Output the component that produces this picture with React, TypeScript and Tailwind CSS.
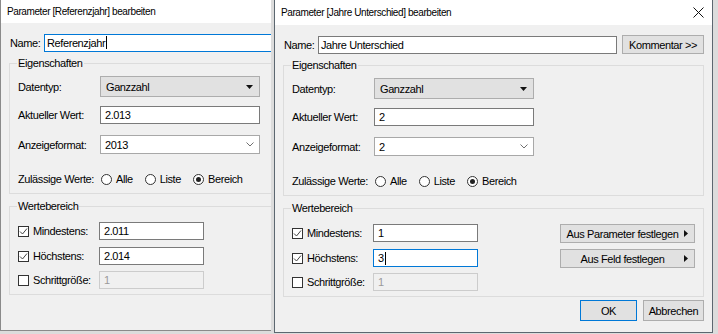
import type { ReactNode } from "react";

type DialogData = {
  title: string;
  titleH: string;
  height: string;
  border: string;
  name: string;
  current: string;
  format: string;
  min: string;
  max: string;
  focus: "name" | "max";
  // left window is partly hidden behind the right one: skip what can't be seen
  cropped?: boolean;
};

const dialogs: DialogData[] = [
  {
    title: "Parameter [Referenzjahr] bearbeiten",
    titleH: "h-[23px]",
    height: "h-[331px]",
    border: "border-[#8a8a8a]",
    name: "Referenzjahr",
    current: "2.013",
    format: "2013",
    min: "2.011",
    max: "2.014",
    focus: "name",
    cropped: true,
  },
  {
    title: "Parameter [Jahre Unterschied] bearbeiten",
    titleH: "h-[25px]",
    height: "h-[333px]",
    border: "border-[#5c6770]",
    name: "Jahre Unterschied",
    current: "2",
    format: "2",
    min: "1",
    max: "3",
    focus: "max",
  },
];

function Caret() {
  return <span className="ml-px inline-block w-px h-[13px] bg-black" />;
}

function TextBox({
  value,
  className,
  focused,
  disabled,
  children,
}: {
  value: string;
  className: string;
  focused?: boolean;
  disabled?: boolean;
  children?: ReactNode;
}) {
  return (
    <div
      className={`flex shrink-0 items-center border pl-[4px] ${className} ${
        disabled
          ? "border-[#cccccc] bg-[#f0f0f0] text-[#9a9a9a]"
          : focused
          ? "border-[#0078d7] bg-white"
          : "border-[#7a7a7a] bg-white"
      }`}
    >
      <span className="whitespace-nowrap">{value}</span>
      {focused && <Caret />}
      {children}
    </div>
  );
}

function GroupBox({ label, className, children }: { label: string; className: string; children: ReactNode }) {
  return (
    <div className={`relative border border-[#dcdcdc] ${className}`}>
      <span className="absolute -top-[8px] left-[7px] px-[1px] bg-[#f0f0f0]">{label}</span>
      {children}
    </div>
  );
}

function Radio({ label, checked }: { label: string; checked?: boolean }) {
  return (
    <div className="flex items-center">
      <span className="flex items-center justify-center w-[11px] h-[11px] rounded-full border border-[#333333] bg-white">
        {checked && <span className="w-[5px] h-[5px] rounded-full bg-[#222222]" />}
      </span>
      <span className="ml-[4px] whitespace-nowrap">{label}</span>
    </div>
  );
}

function CheckBox({ checked }: { checked?: boolean }) {
  return (
    <span className="flex shrink-0 items-center justify-center w-[11px] h-[11px] border border-[#333333] bg-white">
      {checked && (
        <svg width="9" height="9" viewBox="0 0 9 9">
          <polyline points="1,4.5 3.5,7 8,1.5" fill="none" stroke="#444444" strokeWidth="1" />
        </svg>
      )}
    </span>
  );
}

function ArrowButton({ label }: { label: string }) {
  return (
    <div className="relative flex items-center justify-center w-[135px] h-[19px] pr-[10px] border border-[#adadad] bg-[#e1e1e1] whitespace-nowrap">
      {label}
      <svg className="absolute right-[6px] top-[5px]" width="4" height="7" viewBox="0 0 4 7">
        <polygon points="0,0 4,3.5 0,7" fill="#111111" />
      </svg>
    </div>
  );
}

function CheckRow({ label, checked, children, className }: { label: string; checked?: boolean; children: ReactNode; className: string }) {
  return (
    <div className={`flex items-center h-[18px] ${className}`}>
      <div className="flex shrink-0 items-center gap-[4px] w-[81px]">
        <CheckBox checked={checked} />
        <span className="whitespace-nowrap">{label}</span>
      </div>
      {children}
    </div>
  );
}

function Dialog({ d }: { d: DialogData }) {
  return (
    <div className={`flex flex-col w-[439px] border border-t-0 bg-[#f0f0f0] ${d.border} ${d.height}`}>
      {/* Title bar */}
      <div className={`flex items-center justify-between bg-white pl-[6px] pr-[8px] ${d.titleH}`}>
        <span className="text-[10px] whitespace-nowrap">{d.title}</span>
        {!d.cropped && (
          <svg width="11" height="11" viewBox="0 0 11 11">
            <path d="M0.5 0.5 L10.5 10.5 M10.5 0.5 L0.5 10.5" stroke="#111111" strokeWidth="1" />
          </svg>
        )}
      </div>

      <div className="flex flex-col px-[8px]">
        {/* Name */}
        <div className="flex items-center h-[19px] mt-[10px] pl-[1px]">
          <span className="w-[34px] shrink-0">Name:</span>
          <TextBox value={d.name} className="w-[299px] h-[18px] !pl-[2px]" focused={d.focus === "name"} />
          {!d.cropped && (
            <div className="flex shrink-0 items-center justify-center ml-[5px] w-[82px] h-[19px] border border-[#adadad] bg-[#e1e1e1] whitespace-nowrap">
              Kommentar &gt;&gt;
            </div>
          )}
        </div>

        {/* Eigenschaften */}
        <GroupBox label="Eigenschaften" className="mt-[11px] pt-[12px] pb-[7px] pl-[8px]">
          <div className="flex items-center h-[21px]">
            <span className="w-[82px] shrink-0">Datentyp:</span>
            <div className="flex shrink-0 items-center justify-between w-[160px] h-[21px] pl-[5px] pr-[6px] border border-[#adadad] bg-[#e1e1e1]">
              <span>Ganzzahl</span>
              <svg width="7" height="4" viewBox="0 0 7 4">
                <polygon points="0,0 7,0 3.5,4" fill="#111111" />
              </svg>
            </div>
          </div>
          <div className="flex items-center mt-[9px] h-[18px]">
            <span className="w-[82px] shrink-0 whitespace-nowrap">Aktueller Wert:</span>
            <TextBox value={d.current} className="w-[160px] h-[18px]" />
          </div>
          <div className="flex items-center mt-[11px] h-[19px]">
            <span className="w-[82px] shrink-0">Anzeigeformat:</span>
            <TextBox value={d.format} className="w-[160px] h-[19px] justify-between !border-[#a8a8a8] pr-[5px]">
              <svg width="8" height="5" viewBox="0 0 8 5">
                <polyline points="0.5,0.5 4,4 7.5,0.5" fill="none" stroke="#707070" strokeWidth="1" />
              </svg>
            </TextBox>
          </div>
          <div className="flex items-center mt-[18px] h-[14px]">
            <span className="w-[83px] shrink-0 whitespace-nowrap">Zulässige Werte:</span>
            <div className="flex items-center gap-[12px]">
              <Radio label="Alle" />
              <Radio label="Liste" />
              <Radio label="Bereich" checked />
            </div>
          </div>
        </GroupBox>

        {/* Wertebereich */}
        <GroupBox label="Wertebereich" className="flex justify-between mt-[12px] pt-[15px] pb-[5px] pl-[8px] pr-[8px]">
          <div className="flex flex-col">
            <CheckRow label="Mindestens:" checked className="">
              <TextBox value={d.min} className="w-[105px] h-[18px]" />
            </CheckRow>
            <CheckRow label="Höchstens:" checked className="mt-[7px]">
              <TextBox value={d.max} className="w-[105px] h-[18px]" focused={d.focus === "max"} />
            </CheckRow>
            <CheckRow label="Schrittgröße:" className="mt-[6px]">
              <TextBox value="1" className="w-[105px] h-[18px]" disabled />
            </CheckRow>
          </div>
          {!d.cropped && (
            <div className="flex flex-col gap-[6px]">
              <ArrowButton label="Aus Parameter festlegen" />
              <ArrowButton label="Aus Feld festlegen" />
            </div>
          )}
        </GroupBox>

        {/* Footer buttons */}
        {!d.cropped && (
          <div className="flex justify-end gap-[6px] mt-[3px]">
            <div className="flex items-center justify-center w-[57px] h-[21px] border border-[#0078d7] bg-[#e1e1e1]">OK</div>
            <div className="flex items-center justify-center w-[61px] h-[21px] border border-[#adadad] bg-[#e1e1e1]">
              Abbrechen
            </div>
          </div>
        )}
      </div>
    </div>
  );
}

export default function App() {
  return (
    <div className="flex w-[718px] h-[334px] overflow-hidden bg-[#dcdcdc] font-['Liberation_Sans',Arial,sans-serif] text-[11px] tracking-[-0.4px] leading-[14px] text-black">
      <div className="w-[271px] h-[331px] shrink-0 overflow-hidden">
        <Dialog d={dialogs[0]} />
      </div>
      <div className="ml-[3px] shrink-0">
        <Dialog d={dialogs[1]} />
      </div>
    </div>
  );
}
